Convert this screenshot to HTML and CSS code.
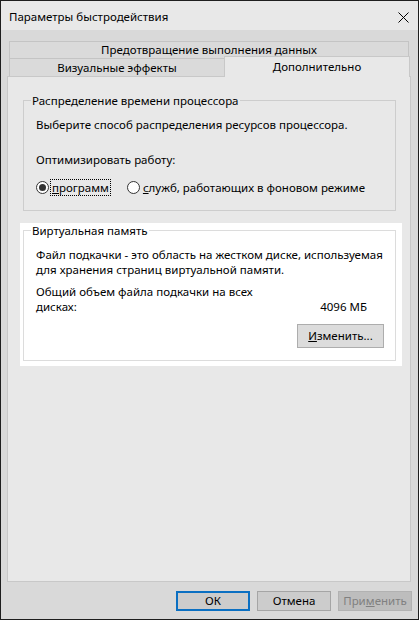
FILE: index.html
```html
<!DOCTYPE html>
<html lang="ru">
<head>
    <meta charset="UTF-8">
    <title>Параметры быстродействия</title>
    <link rel="stylesheet" href="styles.css">
</head>
<body>
    <div class="window">
        <!-- title bar -->
        <div class="titlebar">
            <span class="title">Параметры быстродействия</span>
            <svg class="close" width="11" height="11" viewBox="0 0 11 11">
                <path d="M0.5 0.5 L10.5 10.5 M10.5 0.5 L0.5 10.5" stroke="#000" stroke-width="1" fill="none"/>
            </svg>
        </div>

        <div class="body">
            <!-- tabs -->
            <div class="tabs">
                <div class="tab-row">
                    <div class="tab tab-wide">Предотвращение выполнения данных</div>
                </div>
                <div class="tab-row">
                    <div class="tab tab-left">Визуальные эффекты</div>
                    <div class="tab tab-active">Дополнительно</div>
                </div>
            </div>

            <div class="panel">
                <fieldset class="group cpu">
                    <legend>Распределение времени процессора</legend>
                    <p class="line">Выберите способ распределения ресурсов процессора.</p>
                    <p class="line optimize">Оптимизировать работу:</p>
                    <div class="radios">
                        <div class="radio">
                            <svg width="13" height="13" viewBox="0 0 13 13">
                                <circle cx="6.5" cy="6.5" r="6" stroke="#333" fill="#fff" stroke-width="1"/>
                                <circle cx="6.5" cy="6.5" r="3.5" fill="#333"/>
                            </svg>
                            <span class="radio-label focus"><u>п</u>рограмм</span>
                        </div>
                        <div class="radio second">
                            <svg width="13" height="13" viewBox="0 0 13 13">
                                <circle cx="6.5" cy="6.5" r="6" stroke="#333" fill="#fff" stroke-width="1"/>
                            </svg>
                            <span class="radio-label"><u>с</u>лужб, работающих в фоновом режиме</span>
                        </div>
                    </div>
                </fieldset>

                <div class="highlight">
                    <fieldset class="group vm">
                        <legend>Виртуальная память</legend>
                        <p class="line wide">Файл подкачки - это область на жестком диске, используемая для хранения страниц виртуальной памяти.</p>
                        <div class="total">
                            <span class="total-label">Общий объем файла подкачки на всех дисках:</span>
                            <span class="total-value">4096 МБ</span>
                        </div>
                        <div class="change-row">
                            <button class="btn change"><u>И</u>зменить...</button>
                        </div>
                    </fieldset>
                </div>
            </div>

            <!-- dialog buttons -->
            <div class="buttons">
                <button class="btn ok">ОК</button>
                <button class="btn">Отмена</button>
                <button class="btn disabled">При<u>м</u>енить</button>
            </div>
        </div>
    </div>
</body>
</html>
```

FILE: styles.css
```css
* {
    box-sizing: border-box;
    margin: 0;
}

body {
    font-family: "Noto Sans", "Liberation Sans", sans-serif;
    font-size: 11.5px;
    line-height: 15px;
    color: #000;
}

.window {
    width: 419px;
    height: 620px;
    border: 1px solid #1e1e1e;
    background-color: #d9d9d9;
}

.titlebar {
    height: 29px;
    display: flex;
    align-items: center;
    justify-content: space-between;
    padding: 1px 9px 0 8px;
    background-color: #e8e8e8;
}

.close {
    display: block;
    margin-top: 2px;
}

.body {
    padding: 11px 0 0 6px;
}

/* ---------- tabs ---------- */
.tabs {
    display: flex;
    flex-direction: column;
}

.tab-row {
    display: flex;
    margin-left: 2px;
}

.tab {
    border: 1px solid #c4c4c4;
    border-bottom: none;
    text-align: center;
    background-color: #dadada;
}

.tab-wide {
    width: 400px;
    height: 17px;
    line-height: 16px;
}

.tab-left {
    width: 215px;
    height: 18px;
    line-height: 18px;
    border-right: none;
}

.tab-active {
    position: relative;
    width: 186px;
    height: 21px;
    margin-top: -2px;
    margin-bottom: -1px;
    line-height: 19px;
    background-color: #e8e8e8;
    border-color: #c8c8c8;
}

/* ---------- panel ---------- */
.panel {
    width: 404px;
    height: 506px;
    border: 1px solid #c8c8c8;
    background-color: #e8e8e8;
    padding: 16px 0 0 15px;
}

.group {
    width: 373px;
    border: 1px solid #cdcdcd;
    padding: 9px 11px 14px 12px;
    min-inline-size: 0;
}

.group legend {
    margin-left: -5px;
    padding: 0 1px;
    line-height: 15px;
}

.optimize {
    margin-top: 20px;
}

.radios {
    display: flex;
    align-items: center;
    height: 17px;
    margin-top: 12px;
}

.radio {
    display: flex;
    align-items: center;
}

.radio svg {
    display: block;
}

.radio.second {
    margin-left: 17px;
}

.radio-label {
    padding: 0 1px;
    margin-left: 2px;
}

.focus {
    outline: 1px dotted #000;
}

.highlight {
    width: 382px;
    margin: 12px 0 0 -3px;
    padding: 0 6px 5px 3px;
    background-color: #fff;
}

.vm {
    border-color: #dcdcdc;
    padding-bottom: 12px;
}

.wide {
    margin-right: -6px;
}

.total {
    display: flex;
    align-items: flex-end;
    justify-content: space-between;
    margin-top: 7px;
}

.total-label {
    width: 222px;
}

.total-value {
    margin-right: 17px;
}

.change-row {
    display: flex;
    justify-content: flex-end;
    margin-top: 10px;
}

/* ---------- buttons ---------- */
.btn {
    font-family: "Noto Sans", "Liberation Sans", sans-serif;
    font-size: 11.5px;
    color: #000;
    background-color: #cccccc;
    border: 1px solid #a5a5a5;
    padding: 0;
    width: 74px;
    height: 20px;
    line-height: 16px;
}

.change {
    width: 87px;
    height: 24px;
    background-color: #dcdcdc;
    border-color: #adadad;
}

.buttons {
    display: flex;
    justify-content: flex-end;
    gap: 7px;
    margin-top: 9px;
    padding-right: 6px;
}

.ok {
    border: 2px solid #0a6fc2;
}

.disabled {
    background-color: #bdbdbd;
    border-color: #b2b2b2;
    color: #808080;
}
```
